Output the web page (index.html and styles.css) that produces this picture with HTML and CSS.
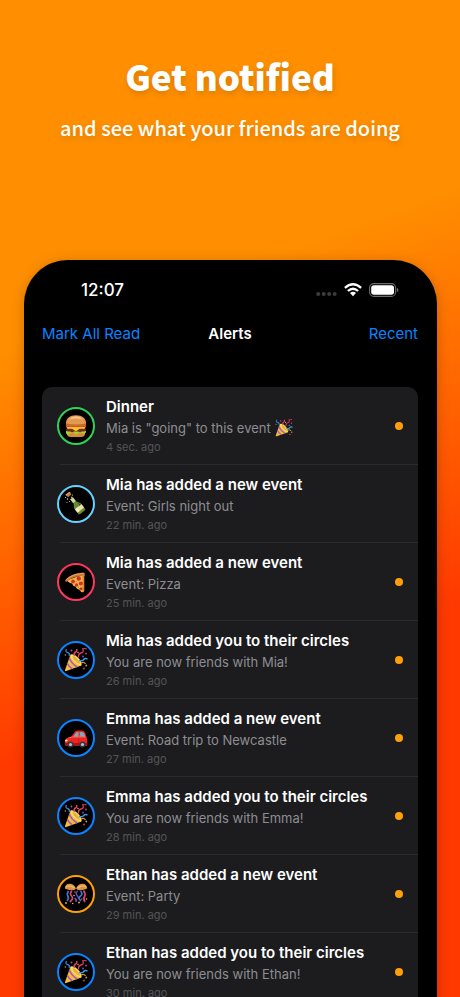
FILE: index.html
```html
<!DOCTYPE html>
<html lang="en">
<head>
  <meta charset="UTF-8">
  <meta name="viewport" content="width=device-width, initial-scale=1">
  <title>Alerts</title>
  <link rel="stylesheet" href="styles.css">
</head>
<body>

<!-- shared emoji drawings -->
<svg class="sprite" aria-hidden="true">
  <symbol id="burger" viewBox="0 0 24 24">
    <path d="M3 18h18v1.500q0 3.500-4 3.500H7q-4 0-4-3.500z" fill="#d88b3e"/>
    <path d="M2 17q2-1.500 4 0t4 0 4 0 4 0 4 0v1.500q-2 2-4 .5t-4 .5-4-.5-4 .5-4-.5z" fill="#a4d52b"/>
    <rect x="2" y="14" width="20" height="3.600" rx="1.800" fill="#6f3220"/>
    <path d="M2 12.500h20l-1.500 2.300h-5L12 17.200l-4-2.400H3.500z" fill="#ffc51f"/>
    <rect x="1.800" y="10.600" width="20.400" height="2.400" rx="1.200" fill="#e2482e"/>
    <path d="M2 10.500C1.500 4 6 1.200 12 1.200S22.500 4 22 10.500q-1 1-3 1H5q-2 0-3-1z" fill="#e29a53"/>
    <path d="M5 5.500Q8 2.300 12 2.300t7 3.200Q12 3.500 5 5.500z" fill="#f6c78b"/>
    <path d="M2 9.500q10 2 20 0v1q-1 1-3 1H5q-2 0-3-1z" fill="#b96a30"/>
  </symbol>
  <symbol id="bottle" viewBox="0 0 24 24">
    <g transform="rotate(-38 12 12)">
      <path d="M10.300 4.500h3.400v5q0 1.500 1.500 3 1 1.200 1 2.500v6q0 1.500-1.500 1.500H9.300q-1.500 0-1.500-1.500v-6q0-1.300 1-2.500 1.500-1.500 1.500-3z" fill="#658d32"/>
      <path d="M10.300 5h3.400v4.500h-3.400z" fill="#d4d69b"/>
      <path d="M7.800 15.500h8.400v4.300H7.800z" fill="#f0dfaa"/>
      <path d="M9 15.500h1.300v4.300H9z" fill="#fff5d2"/>
      <path d="M14.200 12.500q1 1.200 1 2.500v.5h-1.600z" fill="#2d511d"/>
      <path d="M9.800-.8h4.400v2.600H9.800z" fill="#b5773f"/>
      <path d="M9.300-1.800h5.400v1.500H9.300z" fill="#d79c5b"/>
    </g>
    <g fill="#d9d5c4"><circle cx="3.500" cy="7" r=".7"/><circle cx="1.500" cy="5.500" r=".6"/><circle cx="8.500" cy="3" r=".6"/><circle cx="5.500" cy="9.500" r=".5"/><circle cx="3" cy="10.500" r=".5"/><circle cx="7.800" cy="5.300" r=".7"/></g>
  </symbol>
  <symbol id="pizza" viewBox="0 0 24 24">
    <path d="M2.500 10.500L19 4.500v17.500q-1.500 1-2.600-1l-1.400-1.500-2-.7-1.500-2.300-2-.5-1.500-2.500-2-.5z" fill="#f6b44b"/>
    <path d="M1 10.500Q7 3 19.500 2.500q1.500 0 1.300 1.800l-.3 1.800Q11 5.500 3 11.500q-2 .5-2-1z" fill="#c97932"/>
    <path d="M2 9.700Q8 4 19.500 3.500" fill="none" stroke="#eaa457" stroke-width="1"/>
    <path d="M18.500 5h1.800v16q-.5 1.500-1.800 1z" fill="#db8731"/>
    <g fill="#cf3327"><circle cx="14.800" cy="8.500" r="2.200"/><circle cx="9" cy="11.500" r="1.900"/><circle cx="16.800" cy="13.500" r="2"/><circle cx="12.500" cy="15" r="1.700"/><circle cx="17" cy="18.800" r="1.600"/></g>
    <g fill="#6d963b"><circle cx="12" cy="11.500" r=".6"/><circle cx="14.500" cy="17.200" r=".6"/></g>
  </symbol>
  <symbol id="popper" viewBox="0 0 24 24">
    <path d="M6.500 6.500L1 22q-.3 1.500 1.200 1L17.500 17.500z" fill="#f5bd37"/>
    <path d="M6.500 6.500q3.500-1 7.500 3t3.500 8q-3.500 0-7.300-3.500T6.500 6.500z" fill="#ffdc63"/>
    <path d="M8.500 8q2.500 0 5 3t2.500 5q-2.500-.5-5-3T8.500 8z" fill="#e9ae3c"/>
    <path d="M5.300 10q2 5.500 8 9M3.300 15.300q1.700 3.500 5 5.500" fill="none" stroke="#a559c9" stroke-width="1.600"/>
    <path d="M2.500 1q-1.500 3 1 3.500T5.500 8" fill="none" stroke="#3478d2" stroke-width="1.400"/>
    <path d="M10.500 8Q9.500 5 11.500 4t1-3" fill="none" stroke="#e2416c" stroke-width="1.500"/>
    <path d="M14.500 9.500q-.5-4 2.500-4.500t2-3.500 3.500-.5" fill="none" stroke="#dc3c61" stroke-width="1.300"/>
    <path d="M15 12.500q3 1 4.500-.8t4-.7" fill="none" stroke="#3d9ae4" stroke-width="1.500"/>
    <path d="M17 15q3-1.500 4.500.8" fill="none" stroke="#d29a35" stroke-width="1.300"/>
    <g fill="#d64868"><circle cx="7.500" cy="2.500" r=".9"/><circle cx="22" cy="5.500" r=".9"/><circle cx="20" cy="20.500" r=".9"/></g>
    <g fill="#d6a037"><circle cx="14" cy="4.500" r=".8"/><circle cx="22.300" cy="17.500" r=".9"/><circle cx="1.300" cy="7" r=".7"/></g>
    <circle cx="19" cy="8.500" r=".9" fill="#5a62d8"/>
  </symbol>
  <symbol id="car" viewBox="0 0 24 24">
    <path d="M1 14.500q0-2 3-2.800l3.500-1.200 3-4.500q1-1.500 3-1.500h4.200q2.500 0 3.500 2.500l1.300 4q.7 1.500.7 3.500v4q0 1.500-1.500 1.500H3q-2 0-2-2.500z" fill="#ed2720"/>
    <path d="M9.300 10.800l2.500-3.900q.7-1 2-1h.7v4.900zM15.800 5.900h2q1.700 0 2.400 1.500l1.200 3.400h-5.600z" fill="#83a8bb"/>
    <path d="M4 12.200l4-1.200h13.500" fill="none" stroke="#ff7468" stroke-width=".8"/>
    <path d="M1 17h22.200v1.500q0 1.500-1.500 1.500H3q-2 0-2-2z" fill="#ac1518"/>
    <path d="M1.200 14q1.800-1 2.600.4-.8 1.400-2.700 1z" fill="#fff0b0"/>
    <path d="M14.700 12v5" stroke="#ae171b" stroke-width=".6"/>
    <g fill="#33373c"><circle cx="6.500" cy="18.500" r="3"/><circle cx="18.500" cy="18.500" r="3"/></g>
    <g fill="#b9c0c5"><circle cx="6.500" cy="18.500" r="1.600"/><circle cx="18.500" cy="18.500" r="1.600"/></g>
  </symbol>
  <symbol id="confetti" viewBox="0 0 24 24">
    <path d="M.8 6.500Q1 2 5.500 1.800T12 6.500q-1 2.200-5 1.700T.8 6.500z" fill="#db9345"/>
    <path d="M23.200 6.500Q23 2 18.500 1.800T12 6.500q1 2.200 5 1.700t6.200-1.700z" fill="#db9345"/>
    <path d="M2 5.200q3-3 8.500.7M22 5.200q-3-3-8.500.7" fill="none" stroke="#efb96e" stroke-width="1.300"/>
    <path d="M4.500 9q-2 2.500-.6 5t-.9 5M16.500 9q3 3 0 5t.5 5" fill="none" stroke="#3d74d0" stroke-width="1.700"/>
    <path d="M8 9q-3 2.500-.4 5t-1.800 6M19.500 8.500q2.500 3 1 6t.5 5.500" fill="none" stroke="#e14570" stroke-width="1.700"/>
    <path d="M14 9q-3 2-1.200 4t1.700 4M10.500 16q2 1 1.500 4" fill="none" stroke="#4d59ca" stroke-width="1.400"/>
    <g fill="#f1b43b"><circle cx="2" cy="21" r=".9"/><circle cx="10" cy="13.500" r=".8"/><circle cx="15" cy="20.500" r=".9"/><circle cx="22.500" cy="17" r=".8"/><circle cx="8.700" cy="21.500" r=".8"/></g>
    <g fill="#d84d75"><circle cx="11" cy="10" r=".8"/><circle cx="17.800" cy="17" r=".8"/><circle cx="12.500" cy="18" r=".8"/></g>
  </symbol>
</svg>

<header class="promo">
  <h1>Get notified</h1>
  <p>and see what your friends are doing</p>
</header>

<main class="phone">
  <div class="status-bar">
    <time>12:07</time>
    <div class="status-icons">
      <svg width="21" height="14" viewBox="0 0 21 14" fill="#3c3c3e" aria-hidden="true">
        <circle cx="2.200" cy="11" r="2"/><circle cx="7.700" cy="11" r="2"/><circle cx="13.200" cy="11" r="2"/><circle cx="18.700" cy="11" r="2"/>
      </svg>
      <svg width="18" height="14" viewBox="0 0 18 14" fill="none" stroke="#fff" stroke-width="2.300" aria-hidden="true">
        <path d="M.9 4.800Q9-2.200 17.100 4.800M3.900 8Q9 3.500 14.100 8"/>
        <path d="M6 10q3-2.600 6 0l-3 3.200z" fill="#fff" stroke="none"/>
      </svg>
      <svg width="30" height="14" viewBox="0 0 30 14" aria-hidden="true">
        <rect x=".6" y=".6" width="26" height="12.800" rx="4.200" fill="none" stroke="#6c6c6e" stroke-width="1.100"/>
        <rect x="2.200" y="2.200" width="22.800" height="9.600" rx="2.800" fill="#fff"/>
        <path d="M27.900 4.800q1.600.7 1.600 2.200t-1.600 2.200z" fill="#6c6c6e"/>
      </svg>
    </div>
  </div>

  <nav class="nav-bar">
    <button type="button">Mark All Read</button>
    <h2>Alerts</h2>
    <button type="button">Recent</button>
  </nav>

  <ul class="alerts">
    <li class="alert">
      <span class="avatar green"><svg><use href="#burger"/></svg></span>
      <div class="alert-body">
        <h3>Dinner</h3>
        <p>Mia is "going" to this event <svg class="inline-emoji"><use href="#popper"/></svg></p>
        <time>4 sec. ago</time>
      </div>
      <span class="unread"></span>
    </li>
    <li class="alert">
      <span class="avatar sky"><svg><use href="#bottle"/></svg></span>
      <div class="alert-body">
        <h3>Mia has added a new event</h3>
        <p>Event: Girls night out</p>
        <time>22 min. ago</time>
      </div>
    </li>
    <li class="alert">
      <span class="avatar pink"><svg><use href="#pizza"/></svg></span>
      <div class="alert-body">
        <h3>Mia has added a new event</h3>
        <p>Event: Pizza</p>
        <time>25 min. ago</time>
      </div>
      <span class="unread"></span>
    </li>
    <li class="alert">
      <span class="avatar blue"><svg><use href="#popper"/></svg></span>
      <div class="alert-body">
        <h3>Mia has added you to their circles</h3>
        <p>You are now friends with Mia!</p>
        <time>26 min. ago</time>
      </div>
      <span class="unread"></span>
    </li>
    <li class="alert">
      <span class="avatar blue"><svg><use href="#car"/></svg></span>
      <div class="alert-body">
        <h3>Emma has added a new event</h3>
        <p>Event: Road trip to Newcastle</p>
        <time>27 min. ago</time>
      </div>
      <span class="unread"></span>
    </li>
    <li class="alert">
      <span class="avatar blue"><svg><use href="#popper"/></svg></span>
      <div class="alert-body">
        <h3>Emma has added you to their circles</h3>
        <p>You are now friends with Emma!</p>
        <time>28 min. ago</time>
      </div>
      <span class="unread"></span>
    </li>
    <li class="alert">
      <span class="avatar orange"><svg><use href="#confetti"/></svg></span>
      <div class="alert-body">
        <h3>Ethan has added a new event</h3>
        <p>Event: Party</p>
        <time>29 min. ago</time>
      </div>
      <span class="unread"></span>
    </li>
    <li class="alert">
      <span class="avatar blue"><svg><use href="#popper"/></svg></span>
      <div class="alert-body">
        <h3>Ethan has added you to their circles</h3>
        <p>You are now friends with Ethan!</p>
        <time>30 min. ago</time>
      </div>
      <span class="unread"></span>
    </li>
  </ul>
</main>

</body>
</html>
```

FILE: styles.css
```css
* {
  box-sizing: border-box;
}

body {
  margin: 0;
  height: 100vh;
  overflow: hidden;
  background: linear-gradient(160deg, #ff8f00 30%, #ff3a00 66%);
  font-family: Inter, sans-serif;
  color: white;
}

h1, h2, h3, p, ul {
  margin: 0;
  padding: 0;
}

.sprite {
  display: none;
}

.promo {
  padding: 52px 16px 116px;
  text-align: center;
  font-family: "Noto Sans CJK SC", sans-serif;
  text-shadow: 1px 3px 6px rgba(0, 0, 0, 0.15);
}

.promo h1 {
  font-size: 35px;
  line-height: 48px;
  font-weight: 900;
}

.promo p {
  margin-top: 12px;
  font-size: 20px;
  line-height: 32px;
  font-weight: 500;
}

.phone {
  margin: 0 23px 0 24px;
  padding: 18px 19px 0 18px;
  border-radius: 44px 44px 0 0;
  background: black;
  box-shadow: 0 2px 14px rgba(0, 0, 0, 0.2);
}

.status-bar {
  display: flex;
  justify-content: space-between;
  align-items: center;
  height: 24px;
  padding: 0 19px 0 39px;
  font-size: 17px;
  font-weight: 500;
}

.status-icons {
  display: flex;
  align-items: center;
  gap: 7px;
}

.nav-bar {
  display: grid;
  grid-template-columns: 1fr auto 1fr;
  align-items: center;
  margin: 20px 0 41px;
  line-height: 24px;
}

.nav-bar h2 {
  font-size: 15px;
  font-weight: 600;
}

.nav-bar button {
  justify-self: start;
  padding: 0;
  border: none;
  background: none;
  color: #0a84ff;
  font: inherit;
  font-size: 15px;
  cursor: pointer;
}

.nav-bar button:last-child {
  justify-self: end;
}

.alerts {
  list-style: none;
  border-radius: 10px 10px 0 0;
  background: #1c1c1e;
}

.alert {
  display: flex;
  align-items: center;
  height: 78px;
  padding: 0 15px;
  background: linear-gradient(#2b2b2d, #2b2b2d) 18px 100% / 100% 1px no-repeat;
}

.avatar {
  display: flex;
  flex-shrink: 0;
  justify-content: center;
  align-items: center;
  width: 38px;
  height: 38px;
  border: 2px solid;
  border-radius: 50%;
  background: black;
}

.avatar svg {
  width: 24px;
  height: 24px;
}

.green { border-color: #30d158; }
.sky { border-color: #64d2ff; }
.pink { border-color: #ff375f; }
.blue { border-color: #0a84ff; }
.orange { border-color: #ff9f0a; }

.alert-body {
  flex: 1;
  margin-left: 11px;
  white-space: nowrap;
}

.alert-body h3 {
  font-size: 15px;
  line-height: 24px;
  font-weight: 600;
}

.alert-body p {
  display: flex;
  align-items: center;
  gap: 4px;
  color: #8d8d93;
  font-size: 13px;
  line-height: 18px;
}

.alert-body time {
  display: block;
  color: #545458;
  font-size: 11px;
  line-height: 20px;
}

.inline-emoji {
  width: 18px;
  height: 18px;
}

.unread {
  width: 8px;
  height: 8px;
  border-radius: 50%;
  background: #ff9f0a;
}
```
